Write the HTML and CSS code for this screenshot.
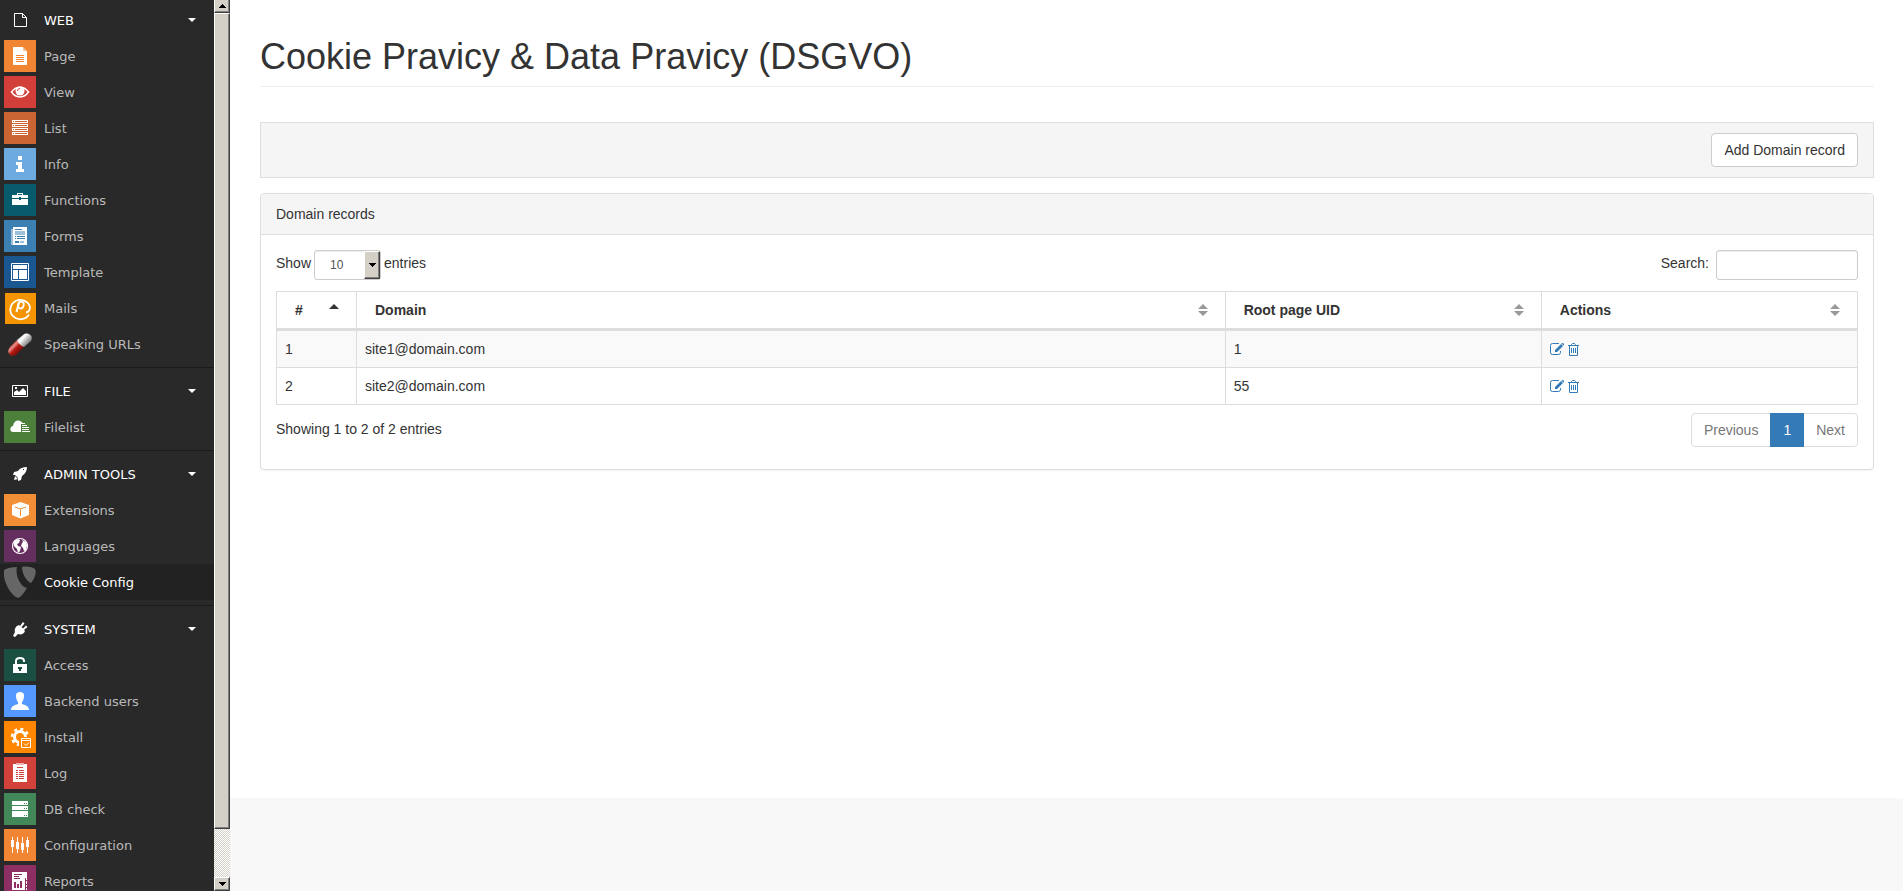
FILE: index.html
```html
<!DOCTYPE html>
<html lang="en">
<head>
<meta charset="utf-8">
<title>Cookie Config</title>
<link rel="stylesheet" href="styles.css">
</head>
<body>
<div class="app">
  <nav class="sidebar" aria-label="Modules">
    <section class="group">
      <button class="group-head" type="button">
        <svg class="icon" viewBox="0 0 32 32"><path d="M10.500 9.500h8l4 4v9h-12z M18.500 9.500v4h4" fill="none" stroke="#fff"/></svg>
        <span>WEB</span><i class="caret"></i>
      </button>
      <a class="item" href="#"><svg class="icon" viewBox="0 0 32 32"><path fill="#f08533" d="M0 0h32v32H0z"/><path fill="#fff" d="M9 7h10v4h4v14H9z"/><path fill="#f8c299" d="M19 7l4 4h-4z"/><path stroke="#f08533" d="M12 15.500h8M12 17.500h8M12 19.500h8M12 21.500h8"/></svg><span>Page</span></a>
      <a class="item" href="#"><svg class="icon" viewBox="0 0 32 32"><path fill="#d23f38" d="M0 0h32v32H0z"/><path fill="none" stroke="#fff" stroke-width="1.500" d="M7.500 16c4.500-6.500 12.500-6.500 17 0c-4.500 6.500-12.500 6.500-17 0z"/><circle cx="16" cy="15" r="4.500" fill="#fff"/><path d="M13.500 15a2.500 2.500 0 0 1 2.500-2.500" fill="none" stroke="#d23f38"/></svg><span>View</span></a>
      <a class="item" href="#"><svg class="icon" viewBox="0 0 32 32"><path fill="#cb6534" d="M0 0h32v32H0z"/><path fill="#fff" d="M8 8h16v3H8zM8 12h16v3H8zM8 16h16v3H8zM8 20h16v3H8z"/><path stroke="#cb6534" d="M9 9.500h1M11 9.500h12M9 13.500h1M11 13.500h12M9 17.500h1M11 17.500h12M9 21.500h1M11 21.500h12"/></svg><span>List</span></a>
      <a class="item" href="#"><svg class="icon" viewBox="0 0 32 32"><path fill="#6daae0" d="M0 0h32v32H0z"/><path fill="#fff" d="M14 8h4v4h-4zM12 14h6v7h2v3h-8v-3h2v-4h-2z"/></svg><span>Info</span></a>
      <a class="item" href="#"><svg class="icon" viewBox="0 0 32 32"><path fill="#085a6d" d="M0 0h32v32H0z"/><path fill="#fff" d="M13 9h6v2h5v3h-7v-1h-2v1H8v-3h5zM14 10v1h4v-1zM8 15h7v1h2v-1h7v6H8z"/></svg><span>Functions</span></a>
      <a class="item" href="#"><svg class="icon" viewBox="0 0 32 32"><path fill="#3b7fb3" d="M0 0h32v32H0z"/><path fill="#9dc0da" d="M7 9h2v16H7z"/><path fill="#fff" d="M9 7h14v18H9z"/><path fill="#9dc0da" d="M11 11h10v4H11zM16 21h4v2h-4z"/><path fill="#3b7fb3" d="M11 9h7v1h-7zM11 16h1v1h-1zM13 16h8v1h-8zM11 18h1v1h-1zM13 18h8v1h-8zM11 21h4v2h-4z"/></svg><span>Forms</span></a>
      <a class="item" href="#"><svg class="icon" viewBox="0 0 32 32"><path fill="#1a568f" d="M0 0h32v32H0z"/><path fill="none" stroke="#fff" d="M7.500 7.500h17v17h-17z"/><path fill="#fff" d="M9 9h14v4H9zM9 14h5v9H9zM15 14h8v9h-8z"/></svg><span>Template</span></a>
      <a class="item" href="#"><svg class="icon" viewBox="0 0 32 32"><path fill="#f39400" d="M1 1h31v31H1z"/><path fill="none" stroke="#fff" stroke-width="1.800" d="M25 22.500A10 9.700 0 1 1 26 15c0 3-1.500 5-4 5.500"/><path fill="none" stroke="#fff" stroke-width="2" d="M12.500 20l2.500-10"/><ellipse cx="17" cy="13" rx="2.700" ry="3.500" transform="rotate(15 17 13)" fill="none" stroke="#fff" stroke-width="1.800"/></svg><span>Mails</span></a>
      <a class="item" href="#"><svg class="icon" viewBox="0 0 32 32"><defs><linearGradient id="pr" gradientUnits="userSpaceOnUse" x1="7" y1="15" x2="17" y2="25"><stop offset="0" stop-color="#c8332c"/><stop offset=".3" stop-color="#e88a85"/><stop offset=".5" stop-color="#b81a14"/><stop offset="1" stop-color="#5e0805"/></linearGradient><linearGradient id="pw" gradientUnits="userSpaceOnUse" x1="16" y1="7" x2="26" y2="16"><stop offset="0" stop-color="#ccc"/><stop offset=".3" stop-color="#fff"/><stop offset=".6" stop-color="#bbb"/><stop offset="1" stop-color="#666"/></linearGradient></defs><path fill="url(#pr)" d="M13 12l7 7-7 7c-5 5-12-1-7-7z"/><path fill="url(#pw)" d="M13 12l6-5c5-4 11 1 8 6l-7 6c-3-1-6-4-7-7z"/></svg><span>Speaking URLs</span></a>
    </section>
    <section class="group">
      <button class="group-head" type="button">
        <svg class="icon" viewBox="0 0 32 32"><path fill="none" stroke="#fff" d="M8.500 10.500h15v11h-15z"/><path fill="#fff" d="M10 20v-3l3-2 2 2 4-4 3 3v4zM11 12h2v2h-2z"/></svg>
        <span>FILE</span><i class="caret"></i>
      </button>
      <a class="item" href="#"><svg class="icon" viewBox="0 0 32 32"><path fill="#4b7f3a" d="M0 0h32v32H0z"/><path fill="#fff" d="M17 21H9c-4 0-3-6 0-6 1-7 8-7 10-2h-2zM18 12h3v1h-3zM18 14h5v1h-5zM18 16h7v1h-7zM18 18h7v1h-7zM18 20h8v1h-8z"/></svg><span>Filelist</span></a>
    </section>
    <section class="group">
      <button class="group-head" type="button">
        <svg class="icon" viewBox="0 0 32 32"><path fill="#fff" d="M23 9c0 4-2 7-5 9l-1 4-3 1v-3l-3-3-2 0 1-3 4-1c2-3 5-4 9-4zM11 18l3 3-4 1z"/><path fill="#292929" d="M19 11h1v1h-1z"/></svg>
        <span>ADMIN TOOLS</span><i class="caret"></i>
      </button>
      <a class="item" href="#"><svg class="icon" viewBox="0 0 32 32"><path fill="#f28e35" d="M0 0h32v32H0z"/><path fill="#fff" d="M16.500 8L25 11v10l-8.500 3.500L8 21V11z"/><path fill="none" stroke="#f28e35" d="M11 13l5.500 2 5.500-2M16.500 15v7"/></svg><span>Extensions</span></a>
      <a class="item" href="#"><svg class="icon" viewBox="0 0 32 32"><path fill="#642e5f" d="M0 0h32v32H0z"/><circle cx="16" cy="16" r="7.500" fill="none" stroke="#fff" stroke-width="1.200"/><path fill="#fff" d="M10 11l4-2 2 1-1 3-2 1 1 2 3 1-1 4-2 2-1-4-3-3zM18 10l4 2 1 3-1 5-2 1-1-3-2-2 1-3 1-1z"/></svg><span>Languages</span></a>
      <a class="item active" href="#" aria-current="page"><svg class="icon" viewBox="0 0 32 32"><path fill="#666" d="M0 4C3 2 8 1 13 1c-2 8 3 20 10 21-3 5-6 9-9 10C7 30-2 14 0 4zM18 1c4-1 11 0 13 2 2 4-1 11-4 14-5-2-9-10-9-16z"/></svg><span>Cookie Config</span></a>
    </section>
    <section class="group">
      <button class="group-head" type="button">
        <svg class="icon" viewBox="0 0 32 32"><path fill="#fff" d="M9 23l2-4c-1-3 1-6 4-7l1 1 3-4 1.500 1.500-3 3.500 1.500 1.500 3-3 1.500 1.500-3.500 3 1 1c-1 3-4 4-7 3l-3 3z"/></svg>
        <span>SYSTEM</span><i class="caret"></i>
      </button>
      <a class="item" href="#"><svg class="icon" viewBox="0 0 32 32"><path fill="#1a4f42" d="M0 0h32v32H0z"/><path fill="#fff" d="M9 15h14v9H9z"/><path fill="none" stroke="#fff" stroke-width="2" d="M12 15v-3c0-4 8-4 8 0v1"/><path fill="#1a4f42" d="M14 18h4v2h-1v2h-2v-2h-1z"/></svg><span>Access</span></a>
      <a class="item" href="#"><svg class="icon" viewBox="0 0 32 32"><path fill="#5599ff" d="M0 0h32v32H0z"/><path fill="#fff" d="M12 10c0-4 8-4 8 0 0 4-1 6-2 7v2c3 1 7 2 7 6H7c0-4 4-5 7-6v-2c-1-1-2-3-2-7z"/></svg><span>Backend users</span></a>
      <a class="item" href="#"><svg class="icon" viewBox="0 0 32 32"><path fill="#ff8700" d="M0 0h32v32H0z"/><circle cx="16" cy="16" r="5.500" fill="none" stroke="#fff" stroke-width="3"/><circle cx="16" cy="16" r="8" fill="none" stroke="#fff" stroke-width="2.500" stroke-dasharray="3.140 3.143"/><path fill="#ff8700" d="M15 16h17v12H15z"/><path fill="none" stroke="#fff" d="M17.500 17.500h9v9h-9zM17 19.500h10M20 22.500l2 2 3-3"/></svg><span>Install</span></a>
      <a class="item" href="#"><svg class="icon" viewBox="0 0 32 32"><path fill="#d2413a" d="M0 0h32v32H0z"/><path fill="#fff" d="M9 7h14v18H9z"/><path fill="#f0b5b2" d="M12 6h8v2h-8z"/><path stroke="#d2413a" d="M13 10.500h6M12 13.500h2M15 13.500h5M12 15.500h2M15 15.500h5M12 17.500h2M15 17.500h5M12 19.500h2M15 19.500h5M12 21.500h2M15 21.500h5"/></svg><span>Log</span></a>
      <a class="item" href="#"><svg class="icon" viewBox="0 0 32 32"><path fill="#428858" d="M0 0h32v32H0z"/><path fill="#fff" d="M8 8h16v4H8zM8 13h16v4H8zM8 18h16v6H8z"/><path fill="#428858" d="M20 10h1v1h-1zM22 10h1v1h-1zM20 15h1v1h-1zM22 15h1v1h-1zM20 22h1v1h-1zM22 22h1v1h-1z"/></svg><span>DB check</span></a>
      <a class="item" href="#"><svg class="icon" viewBox="0 0 32 32"><path fill="#f08533" d="M0 0h32v32H0z"/><path fill="#fff" d="M8 8h1v16H8zM13 8h1v16h-1zM18 8h1v16h-1zM23 8h1v16h-1zM7 11h3v7H7zM12 13h3v7h-3zM17 14h3v7h-3zM22 11h3v7h-3z"/></svg><span>Configuration</span></a>
      <a class="item" href="#"><svg class="icon" viewBox="0 0 32 32"><path fill="#8e2f63" d="M0 0h32v32H0z"/><path fill="#fff" d="M8 7h15v18H8z"/><path fill="#8e2f63" d="M10 9h8v1h-8zM10 11h5v1h-5zM10 13h6v1h-6zM10 17h2v6h-2zM13 19h2v4h-2zM16 16h2v7h-2zM21 13h1v12h-1zM22 15h1v1h-1zM22 19h1v1h-1zM22 22h1v1h-1z"/></svg><span>Reports</span></a>
    </section>
  </nav>
  <div class="scrollbar">
    <button class="sb-btn sb-up" type="button" aria-label="Scroll up"><svg width="7" height="4" viewBox="0 0 7 4"><path d="M3 0h1v1h1v1h1v1h1v1H0V3h1V2h1V1h1z"/></svg></button>
    <div class="sb-thumb"></div>
    <div class="sb-track"></div>
    <button class="sb-btn" type="button" aria-label="Scroll down"><svg width="7" height="4" viewBox="0 0 7 4"><path d="M0 0h7v1H6v1H5v1H4v1H3V3H2V2H1V1H0z"/></svg></button>
  </div>
  <main class="main">
    <div class="content">
      <h1 class="title">Cookie Pravicy &amp; Data Pravicy (DSGVO)</h1>
      <div class="toolbar"><button class="btn" type="button">Add Domain record</button></div>
      <section class="panel">
        <h2 class="panel-head">Domain records</h2>
        <div class="panel-body">
          <div class="controls">
            <div class="length">
              <label for="length">Show</label>
              <span class="select-box"><select id="length"><option>10</option><option>25</option><option>50</option></select><span class="select-arrow"><svg width="7" height="4" viewBox="0 0 7 4"><path d="M0 0h7v1H6v1H5v1H4v1H3V3H2V2H1V1H0z"/></svg></span></span>
              <span>entries</span>
            </div>
            <div class="search"><label for="search">Search:</label><input id="search" type="search"></div>
          </div>
          <table class="records">
            <colgroup><col class="col-num"><col><col class="col-fifth"><col class="col-fifth"></colgroup>
            <thead>
              <tr>
                <th><div class="th"><span>#</span><svg width="10" height="12" viewBox="0 0 10 12"><path fill="#333" d="M5 0l5 5H0z"/></svg></div></th>
                <th><div class="th"><span>Domain</span><svg width="10" height="12" viewBox="0 0 10 12"><path fill="#999" d="M5 0l5 5H0zM0 7h10l-5 5z"/></svg></div></th>
                <th><div class="th"><span>Root page UID</span><svg width="10" height="12" viewBox="0 0 10 12"><path fill="#999" d="M5 0l5 5H0zM0 7h10l-5 5z"/></svg></div></th>
                <th><div class="th"><span>Actions</span><svg width="10" height="12" viewBox="0 0 10 12"><path fill="#999" d="M5 0l5 5H0zM0 7h10l-5 5z"/></svg></div></th>
              </tr>
            </thead>
            <tbody>
              <tr><td>1</td><td>site1@domain.com</td><td>1</td><td><div class="actions">
                <a href="#" aria-label="Edit"><svg width="14" height="12" viewBox="0 0 14 12"><path fill="none" stroke="#337ab7" d="M9 .5H2.500a2 2 0 0 0-2 2v7a2 2 0 0 0 2 2h6a2 2 0 0 0 2-2V8"/><path fill="#337ab7" d="M5 7l6-6 2 2-6 6H5zM11.500.500l.5-.5h1l1 1v1l-.5.500z"/></svg></a>
                <a href="#" aria-label="Delete"><svg width="11" height="13" viewBox="0 0 11 13"><path fill="none" stroke="#337ab7" d="M0 2.500h11M3.500 2.500v-1l1-1h2l1 1v1M1.500 3v9.500h8V3M3.500 5v5M5.500 5v5M7.500 5v5"/></svg></a></div></td></tr>
              <tr><td>2</td><td>site2@domain.com</td><td>55</td><td><div class="actions">
                <a href="#" aria-label="Edit"><svg width="14" height="12" viewBox="0 0 14 12"><path fill="none" stroke="#337ab7" d="M9 .5H2.500a2 2 0 0 0-2 2v7a2 2 0 0 0 2 2h6a2 2 0 0 0 2-2V8"/><path fill="#337ab7" d="M5 7l6-6 2 2-6 6H5zM11.500.500l.5-.5h1l1 1v1l-.5.500z"/></svg></a>
                <a href="#" aria-label="Delete"><svg width="11" height="13" viewBox="0 0 11 13"><path fill="none" stroke="#337ab7" d="M0 2.500h11M3.500 2.500v-1l1-1h2l1 1v1M1.500 3v9.500h8V3M3.500 5v5M5.500 5v5M7.500 5v5"/></svg></a></div></td></tr>
            </tbody>
          </table>
          <div class="foot">
            <span class="info">Showing 1 to 2 of 2 entries</span>
            <div class="pager"><a href="#">Previous</a><a class="current" href="#" aria-current="page">1</a><a href="#">Next</a></div>
          </div>
        </div>
      </section>
    </div>
  </main>
</div>
</body>
</html>
```

FILE: styles.css
```css
* { box-sizing: border-box; }
body {
  margin: 0;
  font: 14px/20px "Liberation Sans", Arial, sans-serif;
  color: #333;
}
.app { display: flex; height: 100vh; overflow: hidden; }

/* Module menu */
.sidebar {
  flex: 0 0 214px;
  padding-top: 2px;
  overflow: hidden;
  background: #292929;
  font: 13px/20px "DejaVu Sans", Verdana, sans-serif;
}
.group + .group { margin-top: 5px; padding-top: 5px; border-top: 1px solid #1b1b1b; }
.group-head, .item {
  display: flex;
  align-items: center;
  gap: 8px;
  width: 100%;
  height: 36px;
  padding: 0 18px 0 4px;
  border: 0;
  background: none;
  font: inherit;
  color: #fff;
  text-align: left;
  text-decoration: none;
}
.group-head span, .item span { padding-top: 2px; }
.item { color: #b9b9b9; }
.active { background: #222; color: #fff; }
.icon { flex: none; width: 32px; height: 32px; }
.caret {
  margin-left: auto;
  border: 4px solid transparent;
  border-top-color: #fff;
  border-bottom: 0;
}

/* Menu scrollbar */
.scrollbar { flex: 0 0 16px; display: flex; flex-direction: column; background: #d4d0c8; }
.sb-btn, .sb-thumb, .select-arrow {
  background: #d4d0c8;
  border: 1px solid;
  border-color: #fff #404040 #404040 #fff;
  box-shadow: inset -1px -1px #808080;
}
.sb-btn { flex: 0 0 14px; display: flex; align-items: center; justify-content: center; padding: 0; }
.sb-up { flex-basis: 13px; border-top: 0; }
.sb-thumb { flex: 815; }
.sb-track { flex: 48; background: repeating-conic-gradient(#fff 0 25%, #d4d0c8 0 50%) 0 0 / 2px 2px; }

/* Module content */
.main { flex: 1; min-width: 0; padding-bottom: 93px; background: #f8f8f8; }
.content { height: 100%; padding: 37px 29px 0 30px; background: #fff; }
.title {
  margin: 0 0 35px;
  padding-bottom: 9px;
  border-bottom: 1px solid #eee;
  font-size: 36px;
  font-weight: 400;
  line-height: 40px;
}
.toolbar {
  display: flex;
  justify-content: flex-end;
  margin-bottom: 15px;
  padding: 10px 15px;
  border: 1px solid #ddd;
  background: #f5f5f5;
}
.btn {
  padding: 6px 12px;
  border: 1px solid #ccc;
  border-radius: 4px;
  background: #fff;
  font: inherit;
  color: #333;
}
.panel { border: 1px solid #ddd; border-radius: 4px; box-shadow: 0 1px 1px rgba(0, 0, 0, .05); }
.panel-head {
  margin: 0;
  padding: 10px 15px;
  border-bottom: 1px solid #ddd;
  border-radius: 3px 3px 0 0;
  background: #f5f5f5;
  font-size: 14px;
  font-weight: 400;
}
.panel-body { padding: 15px 15px 22px; }
.controls { display: flex; justify-content: space-between; margin-bottom: 11px; }
.length, .search { display: flex; line-height: 26px; }
.length { gap: 3px; }
.search { gap: 7px; }
.select-box { position: relative; }
.select-box select, .search input {
  height: 30px;
  border: 1px solid #ccc;
  border-radius: 3px;
  background: #fff;
  box-shadow: inset 0 1px 1px rgba(0, 0, 0, .075);
  font: 12px/18px "Liberation Sans", Arial, sans-serif;
  color: #555;
}
.select-box select { width: 67px; padding: 0 15px; appearance: none; }
.search input { width: 142px; padding: 5px 10px; }
.select-arrow {
  position: absolute;
  top: 1px;
  right: 1px;
  display: flex;
  align-items: center;
  justify-content: center;
  width: 16px;
  height: 28px;
  pointer-events: none;
}
.records {
  width: 100%;
  table-layout: fixed;
  border: solid #ddd;
  border-width: 1px 0 0 1px;
  border-spacing: 0;
}
.col-num { width: 80px; }
.col-fifth { width: 20%; }
.records th, .records td {
  padding: 8px;
  border: solid #ddd;
  border-width: 0 1px 1px 0;
  text-align: left;
}
.records th { padding: 8px 17px 8px 18px; border-bottom-width: 3px; }
.records tbody tr:nth-child(odd) { background: #f9f9f9; }
.th { display: flex; align-items: center; justify-content: space-between; }
.actions { display: flex; align-items: center; gap: 4px; height: 20px; }
.actions a { display: flex; }
.foot { display: flex; justify-content: space-between; align-items: flex-start; margin-top: 8px; }
.info { padding-top: 6px; }
.pager { display: flex; border: 1px solid #ddd; border-radius: 4px; }
.pager a { padding: 6px 12px; color: #777; text-decoration: none; }
.pager .current { margin: -1px 0; padding: 7px 13px; background: #337ab7; color: #fff; }
```
